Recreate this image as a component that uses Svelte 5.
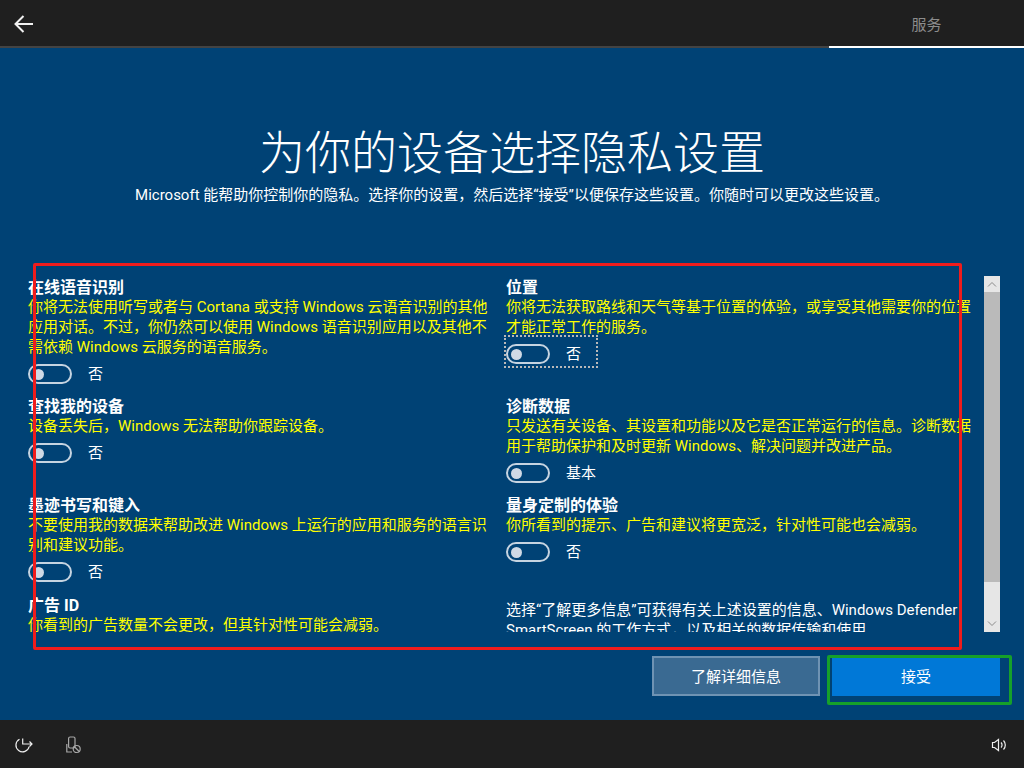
<script>
  const settings = [
    { title: '在线语音识别', text: '你将无法使用听写或者与 Cortana 或支持 Windows 云语音识别的其他应用对话。不过，你仍然可以使用 Windows 语音识别应用以及其他不需依赖 Windows 云服务的语音服务。', value: '否' },
    { title: '位置', text: '你将无法获取路线和天气等基于位置的体验，或享受其他需要你的位置才能正常工作的服务。', value: '否', focused: true },
    { title: '查找我的设备', text: '设备丢失后，Windows 无法帮助你跟踪设备。', value: '否' },
    { title: '诊断数据', text: '只发送有关设备、其设置和功能以及它是否正常运行的信息。诊断数据用于帮助保护和及时更新 Windows、解决问题并改进产品。', value: '基本' },
    { title: '墨迹书写和键入', text: '不要使用我的数据来帮助改进 Windows 上运行的应用和服务的语言识别和建议功能。', value: '否' },
    { title: '量身定制的体验', text: '你所看到的提示、广告和建议将更宽泛，针对性可能也会减弱。', value: '否' },
    { title: '广告 ID', text: '你看到的广告数量不会更改，但其针对性可能会减弱。' }
  ];
</script>

<div class="page">
  <header class="topbar">
    <button class="back" aria-label="返回">
      <svg width="20" height="18" viewBox="0 0 20 18" fill="none" stroke="#f0f0f0" stroke-width="2">
        <path d="M9.500 1 1.500 9l8 8M2 9h17" />
      </svg>
    </button>
    <div class="tab">服务</div>
  </header>

  <main>
    <h1>为你的设备选择隐私设置</h1>
    <p class="intro">Microsoft 能帮助你控制你的隐私。选择你的设置，然后选择“接受”以便保存这些设置。你随时可以更改这些设置。</p>

    <div class="content">
      <div class="list">
        {#each settings as item}
          <section class="item">
            <h2>{item.title}</h2>
            <p>{item.text}</p>
            {#if item.value}
              <div class="toggle" class:focused={item.focused}>
                <span class="track"><span class="knob"></span></span>
                <span class="value">{item.value}</span>
              </div>
            {/if}
          </section>
        {/each}
        <p class="note">选择“了解更多信息”可获得有关上述设置的信息、Windows Defender SmartScreen 的工作方式，以及相关的数据传输和使用。</p>
      </div>

      <div class="scrollbar">
        <span class="arrow">
          <svg width="10" height="6" viewBox="0 0 10 6" fill="none" stroke="#8a8a8a" stroke-width="1"><path d="M1 5.500 5 1.500l4 4" /></svg>
        </span>
        <span class="thumb"></span>
        <span class="rest">
          <svg width="10" height="6" viewBox="0 0 10 6" fill="none" stroke="#8a8a8a" stroke-width="1"><path d="M1 .5 5 4.500l4-4" /></svg>
        </span>
      </div>
    </div>

    <div class="actions">
      <button class="secondary">了解详细信息</button>
      <button class="primary">接受</button>
    </div>

    <!-- annotation boxes drawn over the screen -->
    <div class="mark red"></div>
    <div class="mark green"></div>
  </main>

  <footer>
    <div class="tools">
      <svg width="20" height="20" viewBox="0 0 20 20" fill="none" stroke="#eee" stroke-width="1.2">
        <path d="M5.500 5.200A6.700 6.700 0 1 0 15.200 12.500" />
        <path d="M8.700 4.500V10H18M15.500 7.500 18 10l-2.500 2.500" />
      </svg>
      <svg width="20" height="20" viewBox="0 0 20 20" fill="none" stroke="#a8a8a8" stroke-width="1.2">
        <rect x="4.600" y="3" width="6.400" height="11" rx="1.500" />
        <path d="M2.800 10v8H8" />
        <circle cx="12.700" cy="15" r="3.500" />
        <path d="M10.200 12.500l5 5" />
      </svg>
    </div>
    <svg width="16" height="16" viewBox="0 0 16 16" fill="none" stroke="#eee" stroke-width="1.2">
      <path d="M2.500 6.500h2l4-3v11l-4-3h-2z" />
      <path d="M11 6.500a3.500 3.500 0 0 1 0 5M13.500 4.500a6.500 6.500 0 0 1 0 9" />
    </svg>
  </footer>
</div>

<style>
  :global(body) {
    margin: 0;
    background: #004275;
  }

  .page {
    display: flex;
    flex-direction: column;
    width: 1024px;
    height: 768px;
    overflow: hidden;
    font-family: Roboto, "Noto Sans CJK SC", sans-serif;
    font-size: 15px;
    line-height: 20px;
    color: #fff;
  }

  .topbar {
    display: flex;
    justify-content: space-between;
    flex: none;
    height: 46px;
    background: #1f1f1f;
    border-bottom: 2px solid #434343;
  }

  .back {
    width: 48px;
    height: 46px;
    padding: 2px 0 0 14px;
    display: flex;
    align-items: center;
    background: none;
    border: none;
  }

  .tab {
    width: 195px;
    height: 46px;
    line-height: 50px;
    text-align: center;
    color: #8c8c8c;
    border-bottom: 2px solid #fff;
  }

  main {
    position: relative;
    flex: 1;
    display: flex;
    flex-direction: column;
    background: #004275;
  }

  h1 {
    margin: 73px 0 0;
    font-size: 46px;
    font-weight: 300;
    line-height: 64px;
    text-align: center;
  }

  .intro {
    margin: 0;
    text-align: center;
  }

  .content {
    display: flex;
    gap: 12px;
    height: 356px;
    margin: 71px 24px 0 28px;
  }

  .list {
    flex: 1;
    display: grid;
    grid-template-columns: 462px 466px;
    grid-auto-rows: min-content;
    column-gap: 16px;
    padding-top: 2px;
    overflow: hidden;
  }

  .item {
    padding-bottom: 7.2px;
  }

  h2 {
    margin: 0 0 -1px;
    font-size: 16px;
    font-weight: 700;
    line-height: 20px;
  }

  .item p {
    margin: 0;
    color: #ffff00;
  }

  .toggle {
    position: relative;
    display: flex;
    align-items: center;
    gap: 16px;
    width: max-content;
    height: 32px;
    margin-top: 1px;
  }

  .toggle.focused {
    padding-right: 14px;
  }

  /* focus rectangle, sits a little above the switch like the real one */
  .toggle.focused::after {
    content: "";
    position: absolute;
    top: -3px;
    right: -3px;
    bottom: 2px;
    left: -2px;
    border: 2px dotted #b9b9b9;
  }

  .track {
    display: flex;
    align-items: center;
    box-sizing: border-box;
    width: 44px;
    height: 20px;
    padding-left: 3px;
    border: 2px solid #c6d4e1;
    border-radius: 10px;
  }

  .knob {
    width: 11px;
    height: 11px;
    border-radius: 50%;
    background: #cfd9e5;
  }

  .note {
    grid-column: 2;
    margin: 4px 0 0;
  }

  .scrollbar {
    flex: none;
    display: flex;
    flex-direction: column;
    width: 16px;
    background: #e6e6e6;
  }

  .arrow {
    display: flex;
    align-items: center;
    justify-content: center;
    height: 16px;
  }

  .thumb {
    height: 290px;
    background: #bababa;
  }

  .rest {
    flex: 1;
    display: flex;
    align-items: flex-end;
    justify-content: center;
    padding-bottom: 5px;
  }

  .actions {
    display: flex;
    justify-content: flex-end;
    gap: 12px;
    margin: 24px 24px 0 0;
  }

  button {
    font: inherit;
    color: #fff;
  }

  .secondary,
  .primary {
    width: 168px;
    height: 40px;
    padding: 2px 0 0;
    border: 2px solid transparent;
  }

  .secondary {
    background: #3a6a92;
    border-color: #6f93b3;
  }

  .primary {
    background: #0078d7;
    border-color: #0078d7;
  }

  .mark {
    position: absolute;
    box-sizing: border-box;
    border: 3px solid;
    border-radius: 2px;
    pointer-events: none;
  }

  .red {
    left: 33px;
    top: 215px;
    width: 929px;
    height: 387px;
    border-color: #f01c1c;
  }

  .green {
    left: 827px;
    top: 607px;
    width: 185px;
    height: 50px;
    border-color: #16a02a;
  }

  footer {
    flex: none;
    display: flex;
    align-items: center;
    justify-content: space-between;
    height: 48px;
    padding: 0 18px 0 14px;
    background: #1f1f1f;
  }

  .tools {
    display: flex;
    gap: 30px;
  }
</style>
